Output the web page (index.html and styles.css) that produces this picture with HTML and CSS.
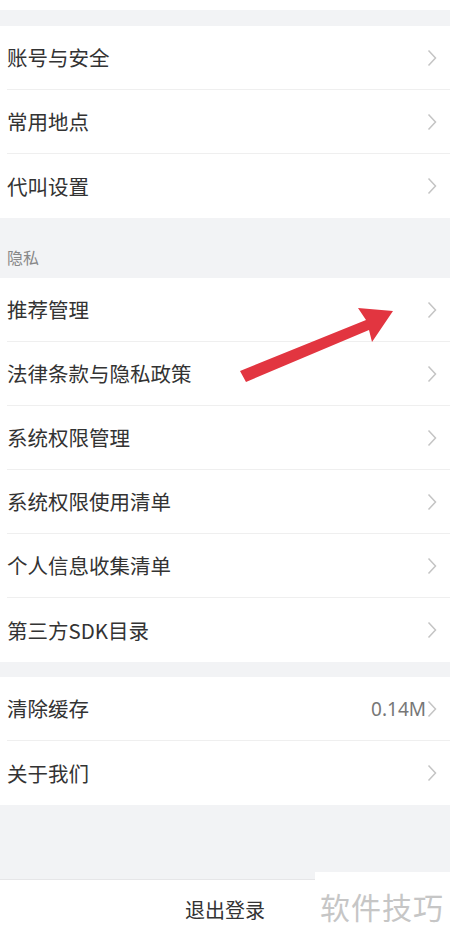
FILE: index.html
```html
<!DOCTYPE html>
<html lang="zh">
<head>
<meta charset="utf-8">
<link rel="stylesheet" href="styles.css">
</head>
<body>
<div class="page">
  <div class="topbar"></div>
  <div class="gap gap-top"></div>
  <div class="group">
    <div class="row"><span class="label">账号与安全</span><span class="chev"><svg width="10" height="18" viewBox="0 0 10 18"><path d="M1.5 1.5 L8.5 9 L1.5 16.5" fill="none" stroke="#c4c4c4" stroke-width="1.5"/></svg></span></div>
    <div class="row"><span class="label">常用地点</span><span class="chev"><svg width="10" height="18" viewBox="0 0 10 18"><path d="M1.5 1.5 L8.5 9 L1.5 16.5" fill="none" stroke="#c4c4c4" stroke-width="1.5"/></svg></span></div>
    <div class="row"><span class="label">代叫设置</span><span class="chev"><svg width="10" height="18" viewBox="0 0 10 18"><path d="M1.5 1.5 L8.5 9 L1.5 16.5" fill="none" stroke="#c4c4c4" stroke-width="1.5"/></svg></span></div>
  </div>
  <div class="section-head">隐私</div>
  <div class="group">
    <div class="row"><span class="label">推荐管理</span><span class="chev"><svg width="10" height="18" viewBox="0 0 10 18"><path d="M1.5 1.5 L8.5 9 L1.5 16.5" fill="none" stroke="#c4c4c4" stroke-width="1.5"/></svg></span></div>
    <div class="row"><span class="label">法律条款与隐私政策</span><span class="chev"><svg width="10" height="18" viewBox="0 0 10 18"><path d="M1.5 1.5 L8.5 9 L1.5 16.5" fill="none" stroke="#c4c4c4" stroke-width="1.5"/></svg></span></div>
    <div class="row"><span class="label">系统权限管理</span><span class="chev"><svg width="10" height="18" viewBox="0 0 10 18"><path d="M1.5 1.5 L8.5 9 L1.5 16.5" fill="none" stroke="#c4c4c4" stroke-width="1.5"/></svg></span></div>
    <div class="row"><span class="label">系统权限使用清单</span><span class="chev"><svg width="10" height="18" viewBox="0 0 10 18"><path d="M1.5 1.5 L8.5 9 L1.5 16.5" fill="none" stroke="#c4c4c4" stroke-width="1.5"/></svg></span></div>
    <div class="row"><span class="label">个人信息收集清单</span><span class="chev"><svg width="10" height="18" viewBox="0 0 10 18"><path d="M1.5 1.5 L8.5 9 L1.5 16.5" fill="none" stroke="#c4c4c4" stroke-width="1.5"/></svg></span></div>
    <div class="row"><span class="label">第三方SDK目录</span><span class="chev"><svg width="10" height="18" viewBox="0 0 10 18"><path d="M1.5 1.5 L8.5 9 L1.5 16.5" fill="none" stroke="#c4c4c4" stroke-width="1.5"/></svg></span></div>
  </div>
  <div class="gap gap-mid"></div>
  <div class="group">
    <div class="row"><span class="label">清除缓存</span><span class="value">0.14M</span><span class="chev chev-tight"><svg width="10" height="18" viewBox="0 0 10 18"><path d="M1.5 1.5 L8.5 9 L1.5 16.5" fill="none" stroke="#c4c4c4" stroke-width="1.5"/></svg></span></div>
    <div class="row"><span class="label">关于我们</span><span class="chev"><svg width="10" height="18" viewBox="0 0 10 18"><path d="M1.5 1.5 L8.5 9 L1.5 16.5" fill="none" stroke="#c4c4c4" stroke-width="1.5"/></svg></span></div>
  </div>
  <div class="gap gap-bottom"></div>
  <div class="logout">退出登录</div>

  <svg class="arrow" width="450" height="939" viewBox="0 0 450 939">
    <polygon points="240,371 366,320 358,308 393,311 372,342 369,330 246,382" fill="#e23540"/>
  </svg>
  <div class="watermark">软件技巧</div>
</div>
</body>
</html>
```

FILE: styles.css
```css
html, body {
  margin: 0;
  padding: 0;
  background: #ffffff;
}
.page {
  position: relative;
  width: 450px;
  height: 939px;
  overflow: hidden;
  font-family: "Noto Sans CJK SC", "Noto Sans", sans-serif;
  color: #333333;
  background: #ffffff;
}
.topbar {
  height: 10px;
  background: #ffffff;
}
.gap {
  background: #f2f3f5;
}
.gap-top { height: 16px; }
.gap-mid { height: 15px; }
.gap-bottom {
  height: 74px;
  border-bottom: 1px solid #e6e6e8;
}
.group {
  background: #ffffff;
}
.row {
  height: 63px;
  display: flex;
  align-items: center;
  margin-left: 7px;
  padding-right: 13px;
  border-bottom: 1px solid #efefef;
}
.row:last-child {
  border-bottom: none;
  height: 64px;
}
.label {
  flex: 1;
  font-size: 20.5px;
  line-height: 1;
  color: #333333;
}
.value {
  font-size: 19px;
  color: #777777;
  margin-right: 1px;
  font-family: "Noto Sans", "Noto Sans CJK SC", sans-serif;
}
.chev {
  display: flex;
  align-items: center;
}
.section-head {
  height: 60px;
  background: #f2f3f5;
  display: flex;
  align-items: flex-end;
  padding-left: 7px;
  padding-bottom: 9px;
  box-sizing: border-box;
  font-size: 16px;
  color: #888888;
}
.logout {
  height: 58px;
  display: flex;
  align-items: center;
  justify-content: center;
  font-size: 20px;
  color: #333333;
  background: #ffffff;
}
.arrow {
  position: absolute;
  left: 0;
  top: 0;
  pointer-events: none;
}
.watermark {
  position: absolute;
  left: 315px;
  top: 872px;
  width: 135px;
  height: 67px;
  background: #ffffff;
  font-size: 30px;
  color: #c6c6c6;
  display: flex;
  align-items: center;
  padding-left: 5px;
  box-sizing: border-box;
  letter-spacing: 1px;
}
```
